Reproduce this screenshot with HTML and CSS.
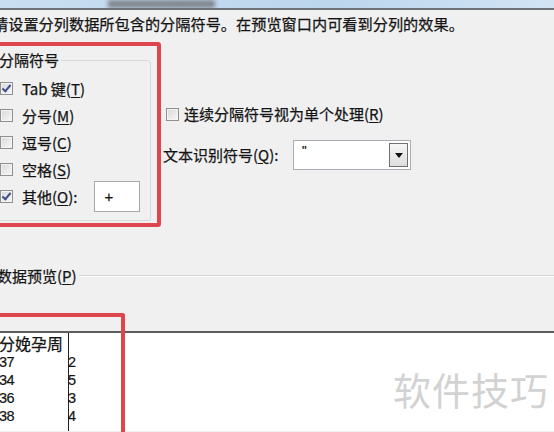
FILE: index.html
```html
<!DOCTYPE html>
<html lang="zh-CN">
<head>
  <meta charset="UTF-8" />
  <title>文本分列向导</title>
  <link rel="stylesheet" href="styles.css">
</head>
<body>
  <div class="titlebar"><div class="title-blur"></div></div>

  <p class="intro">请设置分列数据所包含的分隔符号。在预览窗口内可看到分列的效果。</p>

  <div class="options">
    <fieldset class="group">
      <legend>分隔符号</legend>
      <div class="row"><span class="cb checked"></span><span class="lbl">Tab 键(<u>T</u>)</span></div>
      <div class="row"><span class="cb"></span><span class="lbl">分号(<u>M</u>)</span></div>
      <div class="row"><span class="cb"></span><span class="lbl">逗号(<u>C</u>)</span></div>
      <div class="row"><span class="cb"></span><span class="lbl">空格(<u>S</u>)</span></div>
      <div class="row"><span class="cb checked"></span><span class="lbl">其他(<u>O</u>):</span><span class="other-input">+</span></div>
    </fieldset>

    <div class="side">
      <div class="side-check"><span class="cb"></span><span class="lbl">连续分隔符号视为单个处理(<u>R</u>)</span></div>
      <div class="side-combo">
        <span class="combo-label">文本识别符号(<u>Q</u>):</span>
        <div class="combo">
          <span class="combo-value">"</span>
          <span class="combo-btn"><span class="arrow"></span></span>
        </div>
      </div>
    </div>
  </div>

  <div class="section">
    <span class="section-title">数据预览(<u>P</u>)</span>
    <span class="section-line"></span>
  </div>

  <div class="preview">
    <div class="col first">
      <div class="head">分娩孕周</div>
      <div class="cell">37</div>
      <div class="cell">34</div>
      <div class="cell">36</div>
      <div class="cell">38</div>
    </div>
    <div class="col">
      <div class="head">&nbsp;</div>
      <div class="cell">2</div>
      <div class="cell">5</div>
      <div class="cell">3</div>
      <div class="cell">4</div>
    </div>
  </div>

  <!-- annotation boxes drawn over the dialog -->
  <div class="mark mark-group"></div>
  <div class="mark mark-preview"></div>
  <div class="watermark">软件技巧</div>
</body>
</html>
```

FILE: styles.css
```css
body {
  margin: 0;
  background: #f0f0f0;
  color: #141414;
  font-family: "Noto Sans CJK SC", "Liberation Sans", sans-serif;
  font-size: 15px;
  -webkit-text-stroke: 0.25px #141414;
  width: 554px;
  height: 432px;
  overflow: hidden;
  position: relative;
}
u {
  text-underline-offset: 2px;
}
.titlebar {
  height: 8px;
  background: linear-gradient(to right, #c9def0, #bcd6ee 60%, #d2e4f4);
  border-bottom: 2px solid #6f7379;
  overflow: hidden;
}
.title-blur {
  margin-left: 108px;
  width: 107px;
  height: 8px;
  background: #80868e;
  filter: blur(2px);
}
.intro {
  margin: 4px 0 0 -7px;
  line-height: 18px;
  white-space: nowrap;
  font-size: 15.2px;
}
.options {
  display: flex;
  margin-top: 19px;
}
.group {
  margin: 0 0 0 -10px;
  padding: 0 0 10px 8px;
  width: 161px;
  box-sizing: border-box;
  border: 1px solid #d9d9d9;
  border-radius: 3px;
}
.group legend {
  padding: 0 2px 0 0;
  line-height: 18px;
}
.row {
  display: flex;
  align-items: center;
  height: 27px;
}
.row:first-of-type {
  margin-top: 6px;
}
.cb {
  width: 11px;
  height: 11px;
  border: 1px solid #8f8f8f;
  background: linear-gradient(135deg, #d9d9d9, #f7f7f7);
  box-shadow: inset 0 0 0 1px #f4f4f4;
  flex: none;
  position: relative;
}
.cb.checked::after {
  content: "";
  position: absolute;
  left: 3px;
  top: 0;
  width: 3px;
  height: 7px;
  border: solid #3d4f86;
  border-width: 0 2px 2px 0;
  transform: rotate(40deg);
}
.row .cb {
  margin-left: 1px;
}
.lbl {
  margin-left: 9px;
  line-height: 18px;
  white-space: nowrap;
}
.other-input {
  margin-left: 17px;
  width: 46px;
  height: 31px;
  flex: none;
  box-sizing: border-box;
  border: 1px solid #a8a8a8;
  background: #fff;
  padding-left: 9px;
  line-height: 29px;
  font-family: "Liberation Sans", sans-serif;
}
.side {
  display: flex;
  flex-direction: column;
  margin-left: 12px;
  padding-top: 53px;
}
.side-check {
  display: flex;
  align-items: center;
  height: 20px;
  padding-left: 3px;
}
.side-check .lbl {
  margin-left: 5px;
}
.side-combo {
  display: flex;
  align-items: center;
  margin-top: 16px;
  height: 30px;
}
.combo-label {
  width: 130px;
  line-height: 18px;
  white-space: nowrap;
}
.combo {
  display: flex;
  align-items: center;
  justify-content: space-between;
  width: 118px;
  height: 30px;
  box-sizing: border-box;
  border: 1px solid #a9adb3;
  background: #fff;
  padding: 2px;
}
.combo-value {
  padding-left: 6px;
  align-self: flex-start;
  line-height: 16px;
  font-size: 13px;
  font-family: "Liberation Sans", sans-serif;
}
.combo-btn {
  width: 19px;
  height: 24px;
  box-sizing: border-box;
  border: 1px solid #6f6f6f;
  background: linear-gradient(#f6f6f6, #dedede);
  display: flex;
  align-items: center;
  justify-content: center;
}
.arrow {
  border-left: 4px solid transparent;
  border-right: 4px solid transparent;
  border-top: 5px solid #111;
}
.section {
  display: flex;
  align-items: center;
  margin: 46px 0 0 -3px;
}
.section-title {
  line-height: 18px;
  white-space: nowrap;
}
.section-line {
  flex: 1;
  margin-left: 2px;
  border-top: 1px solid #d4d4d4;
  border-bottom: 1px solid #fafafa;
}
.preview {
  display: flex;
  margin-top: 46px;
  height: 100px;
  box-sizing: border-box;
  background: #fff;
  border-top: 2px solid #5d5d5d;
  overflow: hidden;
}
.col {
  display: flex;
  flex-direction: column;
}
.col.first {
  width: 70px;
  box-sizing: border-box;
  border-right: 1px solid #222;
  margin-left: -1px;
}
.head {
  font-size: 16px;
  line-height: 20px;
  white-space: nowrap;
}
.cell {
  line-height: 18px;
  font-family: "Liberation Sans", sans-serif;
  font-size: 14.5px;
  letter-spacing: -0.5px;
  -webkit-text-stroke: 0.2px #141414;
}
.col:not(.first) .cell {
  margin-left: -1px;
}
.mark {
  position: absolute;
  border: 4px solid #dc464c;
  border-radius: 3px;
}
.mark-group {
  left: -10px;
  top: 42px;
  width: 163px;
  height: 177px;
}
.mark-preview {
  left: -10px;
  top: 313px;
  bottom: 0;
  width: 127px;
  border-bottom: 0;
  border-radius: 3px 3px 0 0;
}
.watermark {
  position: absolute;
  left: 393px;
  top: 370px;
  font-size: 38px;
  line-height: 38px;
  color: #d2d2d2;
  letter-spacing: 1px;
  -webkit-text-stroke: 0;
}
```
